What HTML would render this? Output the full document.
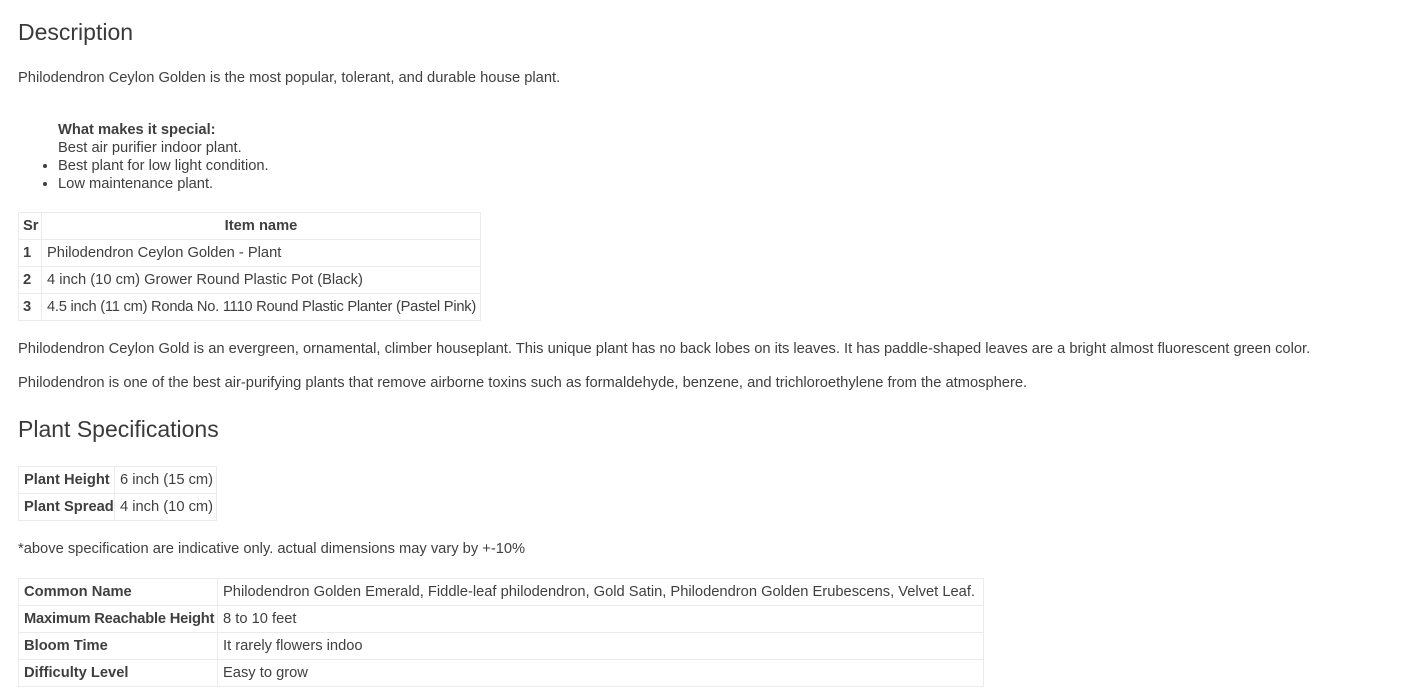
<!DOCTYPE html>
<html><head><meta charset="utf-8"><style>
body{margin:0;width:1419px;height:687px;overflow:hidden;background:#fff;color:#3f3f3f;font-family:"Liberation Sans",sans-serif;font-size:14.7px;position:relative}
.a{position:absolute;left:18px;white-space:nowrap}
h2{margin:0;font-weight:normal;font-size:23px;color:#3a3a3a;position:absolute;left:18px;line-height:30px}
table{position:absolute;left:18px;border-collapse:collapse;table-layout:fixed}
td,th{border:1px solid #ebebeb;height:26px;padding:0 5px;white-space:nowrap;overflow:visible;line-height:26px}
th{font-weight:bold}
td.b{font-weight:bold}
ul{position:absolute;left:18px;top:121px;margin:0;padding-left:40px;line-height:18px}
</style></head><body>
<h2 style="top:17px">Description</h2>
<div class="a" style="top:70px">Philodendron Ceylon Golden is the most popular, tolerant, and durable house plant.</div>
<ul>
<li style="list-style:none"><b>What makes it special:</b><br>Best air purifier indoor plant.</li>
<li>Best plant for low light condition.</li>
<li>Low maintenance plant.</li>
</ul>
<table style="top:212px;width:463px">
<colgroup><col style="width:23px"><col></colgroup>
<tr><th style="text-align:left;padding:0 4px">Sr</th><th>Item name</th></tr>
<tr><td class="b" style="padding:0 4px">1</td><td>Philodendron Ceylon Golden - Plant</td></tr>
<tr><td class="b" style="padding:0 4px">2</td><td>4 inch (10 cm) Grower Round Plastic Pot (Black)</td></tr>
<tr><td class="b" style="padding:0 4px">3</td><td style="letter-spacing:-0.25px">4.5 inch (11 cm) Ronda No. 1110 Round Plastic Planter (Pastel Pink)</td></tr>
</table>
<div class="a" style="top:341px">Philodendron Ceylon Gold is an evergreen, ornamental, climber houseplant. This unique plant has no back lobes on its leaves. It has paddle-shaped leaves are a bright almost fluorescent green color.</div>
<div class="a" style="top:375px">Philodendron is one of the best air-purifying plants that remove airborne toxins such as formaldehyde, benzene, and trichloroethylene from the atmosphere.</div>
<h2 style="top:414px">Plant Specifications</h2>
<table style="top:466px;width:199px">
<colgroup><col style="width:96px"><col></colgroup>
<tr><td class="b">Plant Height</td><td>6 inch (15 cm)</td></tr>
<tr><td class="b">Plant Spread</td><td>4 inch (10 cm)</td></tr>
</table>
<div class="a" style="top:541px">*above specification are indicative only. actual dimensions may vary by +-10%</div>
<table style="top:578px;width:966px">
<colgroup><col style="width:199px"><col></colgroup>
<tr><td class="b">Common Name</td><td>Philodendron Golden Emerald, Fiddle-leaf philodendron, Gold Satin, Philodendron Golden Erubescens, Velvet Leaf.</td></tr>
<tr><td class="b" style="letter-spacing:-0.2px">Maximum Reachable Height</td><td>8 to 10 feet</td></tr>
<tr><td class="b">Bloom Time</td><td>It rarely flowers indoo</td></tr>
<tr><td class="b">Difficulty Level</td><td>Easy to grow</td></tr>
</table>
</body></html>
